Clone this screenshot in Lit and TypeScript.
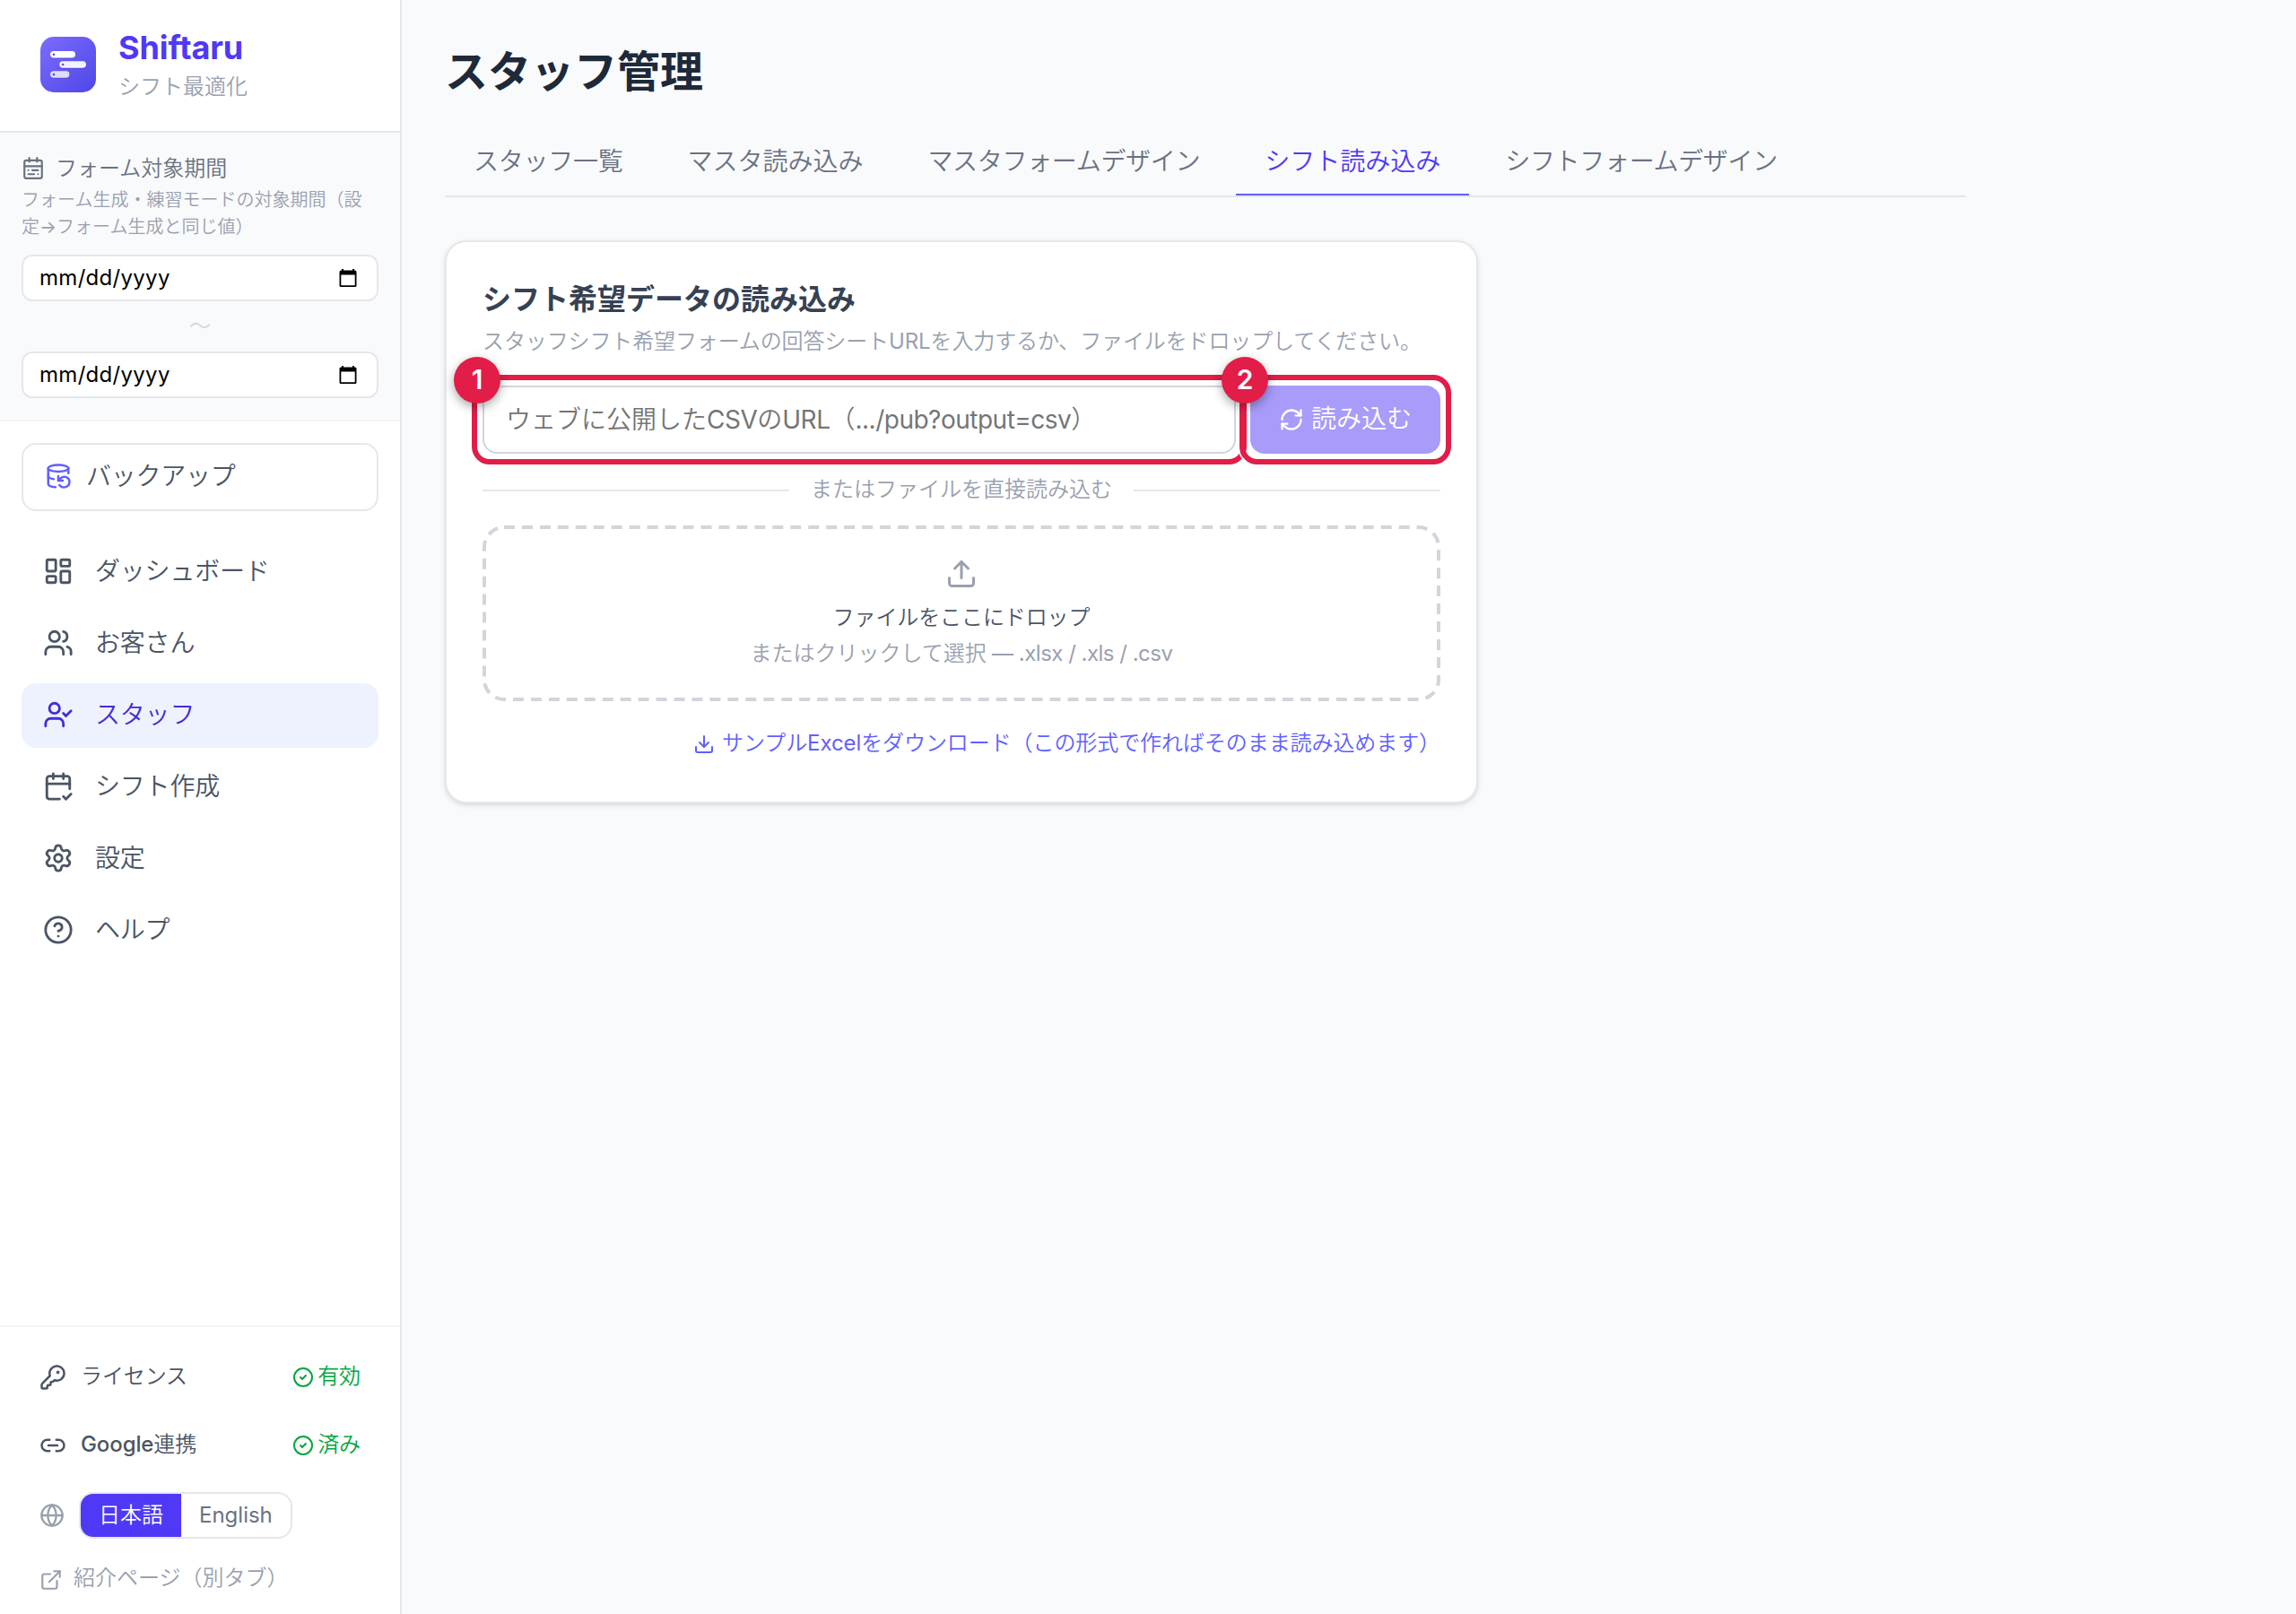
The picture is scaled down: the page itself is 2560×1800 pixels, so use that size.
import { LitElement, html, css, svg } from "lit";
import { customElement, property, state } from "lit/decorators.js";
import { classMap } from "lit/directives/class-map.js";

const ICONS: Record<string, unknown> = {
  calendar: svg`<path d="M8 1v4M16 1v4"/><rect x="3" y="3.5" width="18" height="18.5" rx="2"/><path d="M3 9.5h18M7 13.7h.01M11 13.7h6M7 17.8h6M17 17.8h.01"/>`,
  backup: svg`<ellipse cx="12" cy="5" rx="9" ry="3"/><path d="M3 12a9 3 0 0 0 5 2.69"/><path d="M21 9.3V5"/><path d="M3 5v14a9 3 0 0 0 6.47 2.88"/><path d="M12 12v4h4"/><path d="M13 20a5 5 0 0 0 9-3 4.5 4.5 0 0 0-4.5-4.5c-1.33 0-2.54.54-3.41 1.41L12 16"/>`,
  dashboard: svg`<rect width="7" height="9" x="3" y="3" rx="1"/><rect width="7" height="5" x="14" y="3" rx="1"/><rect width="7" height="9" x="14" y="12" rx="1"/><rect width="7" height="5" x="3" y="16" rx="1"/>`,
  users: svg`<path d="M16 21v-2a4 4 0 0 0-4-4H6a4 4 0 0 0-4 4v2"/><circle cx="9" cy="7" r="4"/><path d="M16 3.128a4 4 0 0 1 0 7.744"/><path d="M22 21v-2a4 4 0 0 0-3-3.87"/>`,
  staff: svg`<path d="m16 11 2 2 4-4"/><path d="M16 21v-2a4 4 0 0 0-4-4H6a4 4 0 0 0-4 4v2"/><circle cx="9" cy="7" r="4"/>`,
  shift: svg`<path d="M8 2v4"/><path d="M16 2v4"/><path d="M21 14V6a2 2 0 0 0-2-2H5a2 2 0 0 0-2 2v14a2 2 0 0 0 2 2h8"/><path d="M3 10h18"/><path d="m16 20 2 2 4-4"/>`,
  settings: svg`<path d="M9.671 4.136a2.34 2.34 0 0 1 4.659 0 2.34 2.34 0 0 0 3.319 1.915 2.34 2.34 0 0 1 2.33 4.033 2.34 2.34 0 0 0 0 3.831 2.34 2.34 0 0 1-2.33 4.033 2.34 2.34 0 0 0-3.319 1.915 2.34 2.34 0 0 1-4.659 0 2.34 2.34 0 0 0-3.32-1.915 2.34 2.34 0 0 1-2.33-4.033 2.34 2.34 0 0 0 0-3.831A2.34 2.34 0 0 1 6.35 6.051a2.34 2.34 0 0 0 3.319-1.915"/><circle cx="12" cy="12" r="3"/>`,
  help: svg`<circle cx="12" cy="12" r="10"/><path d="M9.09 9a3 3 0 0 1 5.83 1c0 2-3 3-3 3"/><path d="M12 17h.01"/>`,
  key: svg`<path d="M2.586 17.414A2 2 0 0 0 2 18.828V21a1 1 0 0 0 1 1h3a1 1 0 0 0 1-1v-1a1 1 0 0 1 1-1h1a1 1 0 0 0 1-1v-1a1 1 0 0 1 1-1h.172a2 2 0 0 0 1.414-.586l.814-.814a6.5 6.5 0 1 0-4-4z"/><circle cx="16.5" cy="7.5" r=".5" fill="currentColor"/>`,
  link: svg`<path d="M9 17H7A5 5 0 0 1 7 7h2"/><path d="M15 7h2a5 5 0 1 1 0 10h-2"/><path d="M8 12h8"/>`,
  check: svg`<circle cx="12" cy="12" r="10"/><path d="m9 12 2 2 4-4"/>`,
  globe: svg`<circle cx="12" cy="12" r="10"/><path d="M12 2a14.5 14.5 0 0 0 0 20 14.5 14.5 0 0 0 0-20"/><path d="M2 12h20"/>`,
  external: svg`<path d="M15 3h6v6"/><path d="M10 14 21 3"/><path d="M18 13v6a2 2 0 0 1-2 2H5a2 2 0 0 1-2-2V8a2 2 0 0 1 2-2h6"/>`,
  refresh: svg`<path d="M3 12a9 9 0 0 1 9-9 9.75 9.75 0 0 1 6.74 2.74L21 8"/><path d="M21 3v5h-5"/><path d="M21 12a9 9 0 0 1-9 9 9.75 9.75 0 0 1-6.74-2.74L3 16"/><path d="M8 16H3v5"/>`,
  upload: svg`<path d="M12 3v12"/><path d="m17 8-5-5-5 5"/><path d="M21 15v4a2 2 0 0 1-2 2H5a2 2 0 0 1-2-2v-4"/>`,
  download: svg`<path d="M12 15V3"/><path d="M21 15v4a2 2 0 0 1-2 2H5a2 2 0 0 1-2-2v-4"/><path d="m7 10 5 5 5-5"/>`,
};

const icon = (name: string, size: number) => html`<svg
  width=${size} height=${size} viewBox="0 0 24 24" fill="none" stroke="currentColor"
  stroke-width="2" stroke-linecap="round" stroke-linejoin="round" aria-hidden="true"
>${ICONS[name]}</svg>`;

const base = css`
  *, *::before, *::after { box-sizing: border-box; }
  h1, h2, p { margin: 0; }
  h1, h2 { font-family: Inter, "Noto Sans CJK JP", sans-serif; }
  svg { display: block; flex: none; }
  button, a { font: inherit; color: inherit; background: none; border: 0; padding: 0; margin: 0; text-decoration: none; text-align: left; }
`;

const NAV = [
  { id: "dashboard", label: "ダッシュボード" },
  { id: "users", label: "お客さん" },
  { id: "staff", label: "スタッフ" },
  { id: "shift", label: "シフト作成" },
  { id: "settings", label: "設定" },
  { id: "help", label: "ヘルプ" },
];

@customElement("date-field")
class DateField extends LitElement {
  static styles = [base, css`
    :host { display: flex; align-items: center; justify-content: space-between; box-sizing: border-box; height: 52px; padding: 0 22px 0 18px; background: #fff; border: 2px solid #e5e7eb; border-radius: 12px; color: #000; font-size: 24px; line-height: 32px; }
    .value { letter-spacing: 0.3px; }
  `];
  render() {
    return html`<span class="value">mm/dd/yyyy</span>
      <svg width="20" height="22" viewBox="0 0 20 22"><path fill="#000" fill-rule="evenodd" d="M3 1h2v1.500h10V1h2v1.500h1a1.500 1.500 0 0 1 1.500 1.500v15.500a1.500 1.500 0 0 1-1.500 1.500H2a1.500 1.500 0 0 1-1.500-1.500V4A1.500 1.500 0 0 1 2 2.500h1zM2.300 7.500v11.700h15.400V7.500z"/></svg>`;
  }
}

@customElement("side-bar")
class SideBar extends LitElement {
  @state() active = "staff";

  static styles = [base, css`
    :host { display: flex; flex-direction: column; box-sizing: border-box; width: 448px; flex: none; background: #fff; border-right: 2px solid #e5e7eb; }
    .brand { display: flex; align-items: center; gap: 24px; height: 148px; padding: 0 44px 2px; border-bottom: 2px solid #e5e7eb; }
    .name { font-size: 36px; line-height: 44px; font-weight: 700; color: #4f39f6; letter-spacing: -0.1px; }
    .tag { font-size: 24px; line-height: 32px; margin-top: 6px; color: #99a1af; }
    .period { height: 322px; padding: 24px; background: #f9fafc; border-bottom: 2px solid #f3f4f6; }
    .period-label { display: flex; align-items: center; gap: 12px; height: 32px; font-size: 24px; line-height: 32px; color: #6a7282; margin-bottom: 4px; }
    .period-note { font-size: 20px; line-height: 30px; color: #99a1af; margin-bottom: 16px; height: 60px; }
    .tilde { height: 56px; line-height: 55px; text-align: center; font-size: 24px; color: #d1d5dc; }
    .backup { display: flex; align-items: center; gap: 16px; height: 76px; margin: 24px 24px 0; padding: 0 24px; border: 2px solid #e5e7eb; border-radius: 16px; color: #4a5565; font-size: 28px; line-height: 40px; letter-spacing: -0.25px; }
    .backup svg { color: #615fff; margin-top: -2px; }
    .nav { display: flex; flex-direction: column; gap: 8px; padding: 32px 24px; flex: 1; }
    .item { display: flex; align-items: center; gap: 24px; height: 72px; padding: 0 24px; border-radius: 16px; font-size: 28px; line-height: 40px; color: #4a5565; letter-spacing: -0.2px; }
    .item svg { margin-top: -2px; }
    .item.on { background: #eef2ff; color: #432dd7; }
    .up { display: block; padding-bottom: 2px; }
    .foot { height: 322px; border-top: 2px solid #f3f4f6; padding: 18px 44px 0; font-size: 24px; line-height: 32px; }
    .row { display: flex; align-items: center; gap: 16px; height: 76px; color: #4a5565; font-weight: 500; }
    .row .up { flex: 1; letter-spacing: -0.1px; }
    .status { display: flex; align-items: center; gap: 4px; color: #00a63e; font-weight: 400; }
    .lang { display: flex; align-items: center; gap: 16px; margin-top: 14px; color: #99a1af; }
    .toggle { display: flex; height: 52px; border: 2px solid #e5e7eb; border-radius: 16px; overflow: hidden; color: #6a7282; }
    .toggle button { padding: 0 20px 1px; }
    .toggle .sel { background: #4f39f6; color: #fff; width: 112px; }
    .toggle .alt { width: 122px; }
    .intro { display: flex; align-items: center; gap: 12px; margin-top: 28px; color: #99a1af; }
    .intro .up { padding-bottom: 3px; }
  `];

  render() {
    return html`
      <div class="brand">
        <svg width="64" height="64" viewBox="0 0 64 64">
          <defs><linearGradient id="g" x1="0" y1="0" x2="1" y2="1"><stop offset="0" stop-color="#7c6cff"/><stop offset="1" stop-color="#4f46e5"/></linearGradient></defs>
          <rect x="1" y="1" width="62" height="62" rx="15" fill="url(#g)"/>
          <g fill="#3b2fb8" opacity=".35"><rect x="12" y="18" width="28" height="7.500" rx="3.700"/><rect x="22.300" y="29.200" width="29.700" height="7.500" rx="3.700"/><rect x="12" y="40.300" width="21.400" height="7.500" rx="3.700"/></g>
          <rect x="12" y="17" width="28" height="7.500" rx="3.700" fill="#fff"/>
          <rect x="22.300" y="28.200" width="29.700" height="7.500" rx="3.700" fill="#f3f1fe"/>
          <rect x="12" y="39.300" width="21.400" height="7.500" rx="3.700" fill="#dfdcfb"/>
          <g fill="#5a4bea"><circle cx="16" cy="20.800" r="1.300"/><circle cx="26.200" cy="32" r="1.300"/><circle cx="16" cy="43.100" r="1.300"/></g>
        </svg>
        <div><div class="name">Shiftaru</div><div class="tag">シフト最適化</div></div>
      </div>
      <div class="period">
        <div class="period-label">${icon("calendar", 26)}<span>フォーム対象期間</span></div>
        <div class="period-note">フォーム生成・練習モードの対象期間（設定→フォーム生成と同じ値）</div>
        <date-field></date-field>
        <div class="tilde">〜</div>
        <date-field></date-field>
      </div>
      <button class="backup">${icon("backup", 30)}<span class="up">バックアップ</span></button>
      <nav class="nav">
        ${NAV.map((n) => html`<a class=${classMap({ item: true, on: n.id === this.active })} @click=${() => (this.active = n.id)}>
          ${icon(n.id, 34)}<span class="up">${n.label}</span></a>`)}
      </nav>
      <div class="foot">
        <div class="row">${icon("key", 30)}<span class="up">ライセンス</span><span class="status">${icon("check", 24)}<span class="up">有効</span></span></div>
        <div class="row">${icon("link", 30)}<span class="up">Google連携</span><span class="status">${icon("check", 24)}<span class="up">済み</span></span></div>
        <div class="lang">${icon("globe", 28)}<div class="toggle"><button class="sel">日本語</button><button class="alt">English</button></div></div>
        <a class="intro">${icon("external", 26)}<span class="up">紹介ページ（別タブ）</span></a>
      </div>`;
  }
}

@customElement("mark-frame")
class MarkFrame extends LitElement {
  @property({ type: Number }) n = 1;
  static styles = [base, css`
    :host { position: absolute; inset: -12px; border: 6px solid #e11d48; border-radius: 20px; box-shadow: 0 0 0 2px rgba(255, 255, 255, 0.85); pointer-events: none; box-sizing: border-box; }
    .dot { position: absolute; left: -26px; top: -26px; width: 52px; height: 52px; border-radius: 50%; background: #e11d48; color: #fff; font-size: 30px; line-height: 51px; font-weight: 600; text-align: center; box-shadow: 0 4px 12px rgba(0, 0, 0, 0.35); }
  `];
  render() {
    return html`<span class="dot">${this.n}</span>`;
  }
}

@customElement("import-card")
class ImportCard extends LitElement {
  static styles = [base, css`
    :host { display: flex; flex-direction: column; box-sizing: border-box; width: 1152px; height: 628px; padding: 40px; background: #fff; border: 2px solid #e5e7eb; border-radius: 24px; box-shadow: 0 2px 6px rgba(0, 0, 0, 0.1), 0 2px 4px -2px rgba(0, 0, 0, 0.1); }
    .title { font-size: 32px; line-height: 48px; font-weight: 700; color: #364153; }
    .desc { font-size: 24px; line-height: 32px; margin-top: 7px; height: 33px; color: #99a1af; white-space: nowrap; letter-spacing: -0.12px; }
    .line { display: flex; gap: 16px; margin-top: 32px; height: 76px; }
    .url, .go { position: relative; display: flex; align-items: center; font-size: 28px; line-height: 40px; }
    .url { flex: 1; border: 2px solid #d1d5dc; border-radius: 16px; padding: 0 24px; color: #757575; white-space: nowrap; }
    .latin { letter-spacing: -0.5px; }
    .url mark-frame { inset: -14px; }
    .go { width: 212px; padding: 0 32px; gap: 8px; border-radius: 16px; background: #a79cfa; color: #fff; }
    .go .t { padding-bottom: 2px; }
    .or { display: flex; align-items: center; gap: 24px; height: 32px; margin-top: 25px; font-size: 24px; line-height: 32px; color: #99a1af; }
    .or::before, .or::after { content: ""; flex: 1; height: 2px; background: #e5e7eb; }
    .or span { width: 336px; padding-bottom: 3px; white-space: nowrap; }
    .drop { position: relative; display: flex; flex-direction: column; align-items: center; height: 196px; margin-top: 23px; padding-top: 36px; font-size: 24px; line-height: 32px; color: #99a1af; }
    .dash { position: absolute; inset: 0; color: #d1d5dc; }
    .drop .main { margin-top: 15px; color: #4a5565; font-weight: 500; letter-spacing: -0.1px; }
    .drop .sub { margin-top: 8px; }
    .sample { display: flex; align-items: center; align-self: flex-end; gap: 8px; margin-top: 32px; height: 32px; font-size: 24px; line-height: 32px; color: #615fff; white-space: nowrap; letter-spacing: -0.08px; }
    .sample span { padding-bottom: 3px; }
  `];
  render() {
    return html`
      <h2 class="title">シフト希望データの読み込み</h2>
      <p class="desc">スタッフシフト希望フォームの回答シートURLを入力するか、ファイルをドロップしてください。</p>
      <div class="line">
        <div class="url"><span>ウェブに公開した<span class="latin">CSV</span>の<span class="latin">URL</span>（<span class="latin">.../pub?output=csv</span>）</span><mark-frame .n=${1}></mark-frame></div>
        <div class="go">${icon("refresh", 28)}<span class="t">読み込む</span><mark-frame .n=${2}></mark-frame></div>
      </div>
      <div class="or"><span>またはファイルを直接読み込む</span></div>
      <div class="drop">
        <svg class="dash" width="1068" height="196" fill="none"><rect x="2" y="2" width="1064" height="192" rx="22" stroke="currentColor" stroke-width="4" stroke-dasharray="12 7.953"/></svg>
        ${icon("upload", 36)}
        <div class="main">ファイルをここにドロップ</div>
        <div class="sub">またはクリックして選択<span class="latin"> — .xlsx / .xls / .csv</span></div>
      </div>
      <a class="sample">${icon("download", 24)}<span>サンプルExcelをダウンロード（この形式で作ればそのまま読み込めます）</span></a>`;
  }
}

@customElement("app-root")
class AppRoot extends LitElement {
  @state() tab = 3;
  private tabs = ["スタッフ一覧", "マスタ読み込み", "マスタフォームデザイン", "シフト読み込み", "シフトフォームデザイン"];

  static styles = [base, css`
    :host { display: flex; height: 1800px; overflow: hidden; background: #f9fafc; font-family: Inter, "Noto Sans CJK JP DemiLight", "Noto Sans CJK JP Light", "Noto Sans CJK JP", sans-serif; font-weight: 400; }
    .main { flex: 1; padding: 48px; }
    .heading { font-size: 48px; line-height: 64px; height: 64px; font-weight: 700; color: #1e2939; }
    .tabs { display: flex; gap: 8px; width: 1696px; height: 76px; margin: 32px 0 48px; border-bottom: 2px solid #e5e7eb; }
    .tab { height: 74px; padding: 0 32px; font-size: 28px; line-height: 40px; color: #6a7282; border-bottom: 2px solid transparent; white-space: nowrap; }
    .tab:first-child { letter-spacing: -0.27px; }
    .tab.long { letter-spacing: -0.31px; }
    .tab.on { color: #4f39f6; border-bottom-color: #615fff; }
  `];
  render() {
    return html`<side-bar></side-bar>
      <main class="main">
        <h1 class="heading">スタッフ管理</h1>
        <div class="tabs">${this.tabs.map((t, i) => html`<button class=${classMap({ tab: true, long: t.length > 8, on: i === this.tab })} @click=${() => (this.tab = i)}>${t}</button>`)}</div>
        <import-card></import-card>
      </main>`;
  }
}
